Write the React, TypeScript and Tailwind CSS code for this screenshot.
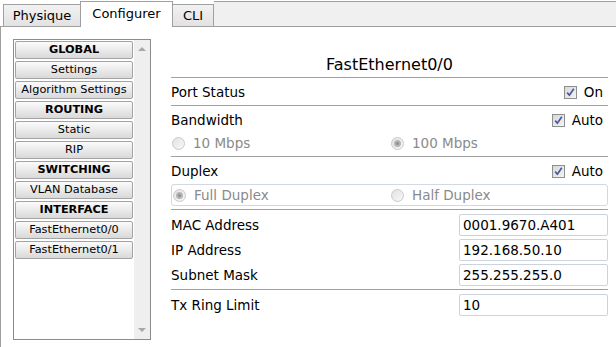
import React from "react"

function Checkbox() {
  return (
    <span className="inline-flex h-[13px] w-[13px] items-center justify-center border border-[#8e8f8f] bg-gradient-to-br from-[#d8d8d8] to-[#f4f4f4]">
      <svg width="9" height="9" viewBox="0 0 9 9">
        <path d="M1.2 4.6 L3.4 7.2 L7.8 0.8" fill="none" stroke="#4758a0" strokeWidth="1.7" />
      </svg>
    </span>
  )
}

function Radio({ checked }: { checked?: boolean }) {
  return (
    <span className="inline-flex h-[13px] w-[13px] items-center justify-center rounded-full border border-[#c9c9c9] bg-gradient-to-br from-[#e2e2e2] to-[#f8f8f8]">
      {checked && (
        <span className="flex h-[7px] w-[7px] items-center justify-center rounded-full bg-[#b5b5b5]">
          <span className="h-[3px] w-[3px] rounded-full bg-[#8f8f8f]" />
        </span>
      )}
    </span>
  )
}

function Line() {
  return <div className="h-px bg-[#a0a0a0]" />
}

function Field({ label, value }: { label: string; value: string }) {
  return (
    <div className="flex h-[22px] items-center justify-between">
      <span>{label}</span>
      <div className="flex h-[22px] w-[149px] items-center rounded-[2px] border border-[#cdd3dc] bg-white pl-[3px]">
        {value}
      </div>
    </div>
  )
}

const menu = [
  { label: "GLOBAL", head: true },
  { label: "Settings" },
  { label: "Algorithm Settings" },
  { label: "ROUTING", head: true },
  { label: "Static" },
  { label: "RIP" },
  { label: "SWITCHING", head: true },
  { label: "VLAN Database" },
  { label: "INTERFACE", head: true },
  { label: "FastEthernet0/0" },
  { label: "FastEthernet0/1" },
]

export default function App() {
  return (
    <div className="h-[347px] w-[616px] overflow-hidden bg-white font-['DejaVu_Sans',sans-serif] text-[13.5px] text-black">
      {/* tabs */}
      <div className="flex h-[27px] items-end text-[13px]">
        <div className="h-[27px] w-[3px] border-b border-[#a0a0a0]" />
        <div className="flex h-[23px] w-[77px] items-center justify-center border border-r-0 border-[#a0a0a0] bg-gradient-to-b from-[#f2f2f2] to-[#e2e2e2]">
          Physique
        </div>
        <div className="flex h-[26px] w-[93px] items-center justify-center border border-b-0 border-[#a0a0a0] bg-white pb-[2px]">
          Configurer
        </div>
        <div className="flex h-[23px] w-[41px] items-center justify-center border border-l-0 border-[#a0a0a0] bg-gradient-to-b from-[#f2f2f2] to-[#e2e2e2]">
          CLI
        </div>
        <div className="h-[26px] flex-1 border-y border-[#a0a0a0] bg-[#f0f0f0]" />
      </div>

      <div className="flex h-[320px] border-l border-[#a0a0a0] pl-[12px] pt-[12px]">
        {/* left menu */}
        <div className="flex h-[301px] w-[138px] border border-[#8c8c8c] bg-white">
          <div className="flex w-[119px] flex-col gap-[2px] pl-px pt-px text-[11.3px]">
            {menu.map((m) => (
              <div
                key={m.label}
                className={`flex h-[18px] items-center justify-center rounded-[2px] border border-[#a3a3a3] bg-gradient-to-b from-[#fbfbfb] to-[#d9d9d9] leading-none ${m.head ? "font-bold" : ""}`}
              >
                {m.label}
              </div>
            ))}
          </div>
          <div className="ml-auto flex w-[16px] flex-col items-center justify-between bg-[#efefef] py-[7px]">
            <span className="h-0 w-0 border-x-[4px] border-b-[4px] border-x-transparent border-b-[#a8a8a8]" />
            <span className="h-0 w-0 border-x-[4px] border-t-[4px] border-x-transparent border-t-[#a8a8a8]" />
          </div>
        </div>

        {/* right panel */}
        <div className="ml-[20px] flex w-[437px] flex-col">
          <div className="flex h-[38px] items-end justify-center pb-[3px] text-[16px] leading-[19px]">
            FastEthernet0/0
          </div>
          <Line />
          <div className="flex h-[27px] items-center justify-between pr-[5px] pt-[1px]">
            <span>Port Status</span>
            <span className="flex items-center gap-[7px]">
              <Checkbox />
              On
            </span>
          </div>
          <Line />
          <div className="flex h-[27px] items-center justify-between pr-[5px] pt-[1px]">
            <span>Bandwidth</span>
            <span className="flex items-center gap-[7px]">
              <Checkbox />
              Auto
            </span>
          </div>
          <div className="mb-[2px] flex h-[21px] items-center text-[#8a8a8a]">
            <div className="flex w-[220px] items-center gap-[8px] pl-[1px]">
              <Radio />
              10 Mbps
            </div>
            <div className="flex items-center gap-[8px]">
              <Radio checked />
              100 Mbps
            </div>
          </div>
          <Line />
          <div className="flex h-[27px] items-center justify-between pr-[5px] pt-[1px]">
            <span>Duplex</span>
            <span className="flex items-center gap-[7px]">
              <Checkbox />
              Auto
            </span>
          </div>
          <div className="mb-[3px] flex h-[22px] items-center rounded-[3px] border border-[#d3d9e2] text-[#8a8a8a]">
            <div className="flex w-[219px] items-center gap-[8px] pl-[1px]">
              <Radio checked />
              Full Duplex
            </div>
            <div className="flex items-center gap-[8px]">
              <Radio />
              Half Duplex
            </div>
          </div>
          <Line />
          <div className="flex flex-col gap-[3px] pb-[3px] pt-[4px]">
            <Field label="MAC Address" value="0001.9670.A401" />
            <Field label="IP Address" value="192.168.50.10" />
            <Field label="Subnet Mask" value="255.255.255.0" />
          </div>
          <Line />
          <div className="pt-[4px]">
            <Field label="Tx Ring Limit" value="10" />
          </div>
        </div>
      </div>
    </div>
  )
}
